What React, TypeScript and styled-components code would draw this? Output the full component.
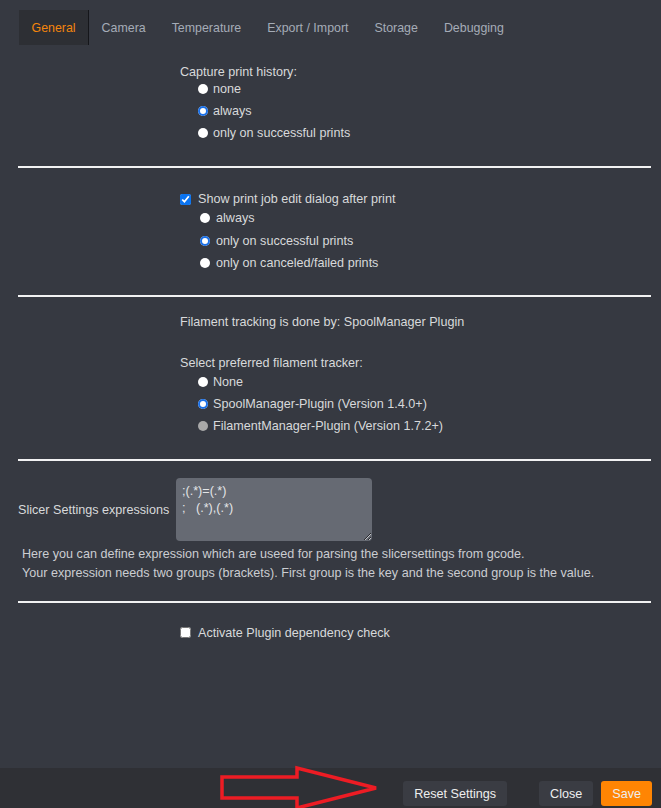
import React from "react";
import styled, { createGlobalStyle } from "styled-components";

const GlobalStyle = createGlobalStyle`
  html, body { margin: 0; padding: 0; background: #363941; }
  body { font-family: "Liberation Sans", Arial, sans-serif; font-size: 12.6px; color: #d8d9db; }
  * { box-sizing: border-box; }
`;

const Page = styled.div`
  position: relative;
  height: 808px;
  display: flex;
  flex-direction: column;
  overflow: hidden;
  background: #363941;
`;

const TabBar = styled.div`
  display: flex;
  padding: 10px 0 0 19px;
`;

const Tab = styled.div<{ $active?: boolean }>`
  height: 35px;
  display: flex;
  align-items: center;
  padding: 0 12.5px 0 12.5px;
  color: ${(p) => (p.$active ? "#f4850c" : "#a5acb7")};
  background: ${(p) => (p.$active ? "#2d2f34" : "transparent")};
  border-right: 1px solid ${(p) => (p.$active ? "#15161a" : "transparent")};
  font-size: 12.4px;
`;

const Content = styled.div`
  flex: 1;
  padding: 0 10px 0 18px;
`;

const Section = styled.div<{ $pt: number; $pb: number }>`
  padding-top: ${(p) => p.$pt}px;
  padding-bottom: ${(p) => p.$pb}px;
`;

const Controls = styled.div`
  margin-left: 162px;
`;

const Divider = styled.div`
  height: 2px;
  background: #f2f2f2;
`;

const Line = styled.div<{ $h: number; $mt?: number }>`
  height: ${(p) => p.$h}px;
  line-height: ${(p) => p.$h}px;
  margin-top: ${(p) => p.$mt ?? 0}px;
  white-space: nowrap;
`;

const Row = styled.label<{ $h: number; $indent: number; $gap: number }>`
  display: flex;
  align-items: center;
  height: ${(p) => p.$h}px;
  padding-left: ${(p) => p.$indent}px;
  gap: ${(p) => p.$gap}px;
  white-space: nowrap;
`;

const Radio = styled.input.attrs({ type: "radio" })`
  appearance: none;
  -webkit-appearance: none;
  margin: 0;
  width: 10px;
  height: 10px;
  border-radius: 50%;
  background: #ffffff;
  flex: none;
  &:checked {
    box-shadow: inset 0 0 0 2px #1a6fe6;
  }
  &:disabled {
    background: #a9a9a9;
  }
`;

const Check = styled.input.attrs({ type: "checkbox" })`
  margin: 0;
  width: 11px;
  height: 11px;
  flex: none;
  accent-color: #0b74f0;
`;

const SlicerGrid = styled.div`
  display: grid;
  grid-template-columns: 158px 196px;
  align-items: center;
`;

const FieldLabel = styled.div`
  text-align: right;
  padding-right: 7px;
  white-space: nowrap;
`;

const TextArea = styled.textarea`
  width: 196px;
  height: 63px;
  margin: 0;
  padding: 5px 6px;
  border: none;
  border-radius: 4px;
  background: #666a73;
  color: #e4e5e7;
  font-family: "Liberation Sans", Arial, sans-serif;
  font-size: 12.6px;
  line-height: 17px;
  outline: none;
`;

const Help = styled.div`
  margin-top: 3.5px;
  padding-left: 4px;
  line-height: 19px;
  color: #cbcdd1;
`;

const Footer = styled.div`
  height: 40px;
  flex: none;
  background: #2f3035;
  display: flex;
  justify-content: flex-end;
  align-items: flex-start;
  padding: 13px 9px 0 0;
  gap: 8px;
  overflow: hidden;
`;

const Button = styled.div<{ $primary?: boolean; $spaced?: boolean }>`
  height: 25px;
  display: flex;
  align-items: center;
  padding: 0 11px;
  border-radius: 3px;
  background: ${(p) => (p.$primary ? "#ff8503" : "#3a3c43")};
  color: #eeeeee;
  margin-right: ${(p) => (p.$spaced ? 24 : 0)}px;
`;

const Annotation = styled.svg`
  position: absolute;
  left: 218px;
  top: 764px;
  width: 165px;
  height: 50px;
  pointer-events: none;
`;

const tabs = ["General", "Camera", "Temperature", "Export / Import", "Storage", "Debugging"];

export default function App() {
  return (
    <Page>
      <GlobalStyle />
      <TabBar>
        {tabs.map((t, i) => (
          <Tab key={t} $active={i === 0}>
            {t}
          </Tab>
        ))}
      </TabBar>
      <Content>
        <Section $pt={21} $pb={22}>
          <Controls>
            <Line $h={12}>Capture print history:</Line>
            <Row $h={22} $indent={18} $gap={5}>
              <Radio name="hist" />
              none
            </Row>
            <Row $h={22} $indent={18} $gap={5}>
              <Radio name="hist" defaultChecked />
              always
            </Row>
            <Row $h={22} $indent={18} $gap={5}>
              <Radio name="hist" />
              only on successful prints
            </Row>
          </Controls>
        </Section>
        <Divider />
        <Section $pt={23.5} $pb={20.5}>
          <Controls>
            <Row $h={15.5} $indent={0} $gap={7}>
              <Check defaultChecked />
              Show print job edit dialog after print
            </Row>
            <Row $h={22.5} $indent={20} $gap={6}>
              <Radio name="dlg" />
              always
            </Row>
            <Row $h={22.5} $indent={20} $gap={6}>
              <Radio name="dlg" defaultChecked />
              only on successful prints
            </Row>
            <Row $h={22.5} $indent={20} $gap={6}>
              <Radio name="dlg" />
              only on canceled/failed prints
            </Row>
          </Controls>
        </Section>
        <Divider />
        <Section $pt={17} $pb={22}>
          <Controls>
            <Line $h={16}>Filament tracking is done by: SpoolManager Plugin</Line>
            <Line $h={16} $mt={25}>
              Select preferred filament tracker:
            </Line>
            <Row $h={22} $indent={18} $gap={5}>
              <Radio name="trk" />
              None
            </Row>
            <Row $h={22} $indent={18} $gap={5}>
              <Radio name="trk" defaultChecked />
              SpoolManager-Plugin (Version 1.4.0+)
            </Row>
            <Row $h={22} $indent={18} $gap={5}>
              <Radio name="trk" disabled />
              FilamentManager-Plugin (Version 1.7.2+)
            </Row>
          </Controls>
        </Section>
        <Divider />
        <Section $pt={17} $pb={18.5}>
          <SlicerGrid>
            <FieldLabel>Slicer Settings expressions</FieldLabel>
            <TextArea defaultValue={";(.*)=(.*)\n;   (.*),(.*)"} spellCheck={false} />
          </SlicerGrid>
          <Help>
            Here you can define expression which are useed for parsing the slicersettings from gcode.
            <br />
            Your expression needs two groups (brackets). First group is the key and the second group is the value.
          </Help>
        </Section>
        <Divider />
        <Section $pt={21.5} $pb={0}>
          <Controls>
            <Row $h={16} $indent={0} $gap={7}>
              <Check />
              Activate Plugin dependency check
            </Row>
          </Controls>
        </Section>
      </Content>
      <Footer>
        <Button $spaced>Reset Settings</Button>
        <Button>Close</Button>
        <Button $primary>Save</Button>
      </Footer>
      <Annotation viewBox="0 0 165 50">
        <polygon
          points="4,13 79,13 79,4 158,24 79,44 79,34 4,34"
          fill="none"
          stroke="#ed1c24"
          strokeWidth={3.5}
          strokeLinejoin="miter"
        />
      </Annotation>
    </Page>
  );
}
